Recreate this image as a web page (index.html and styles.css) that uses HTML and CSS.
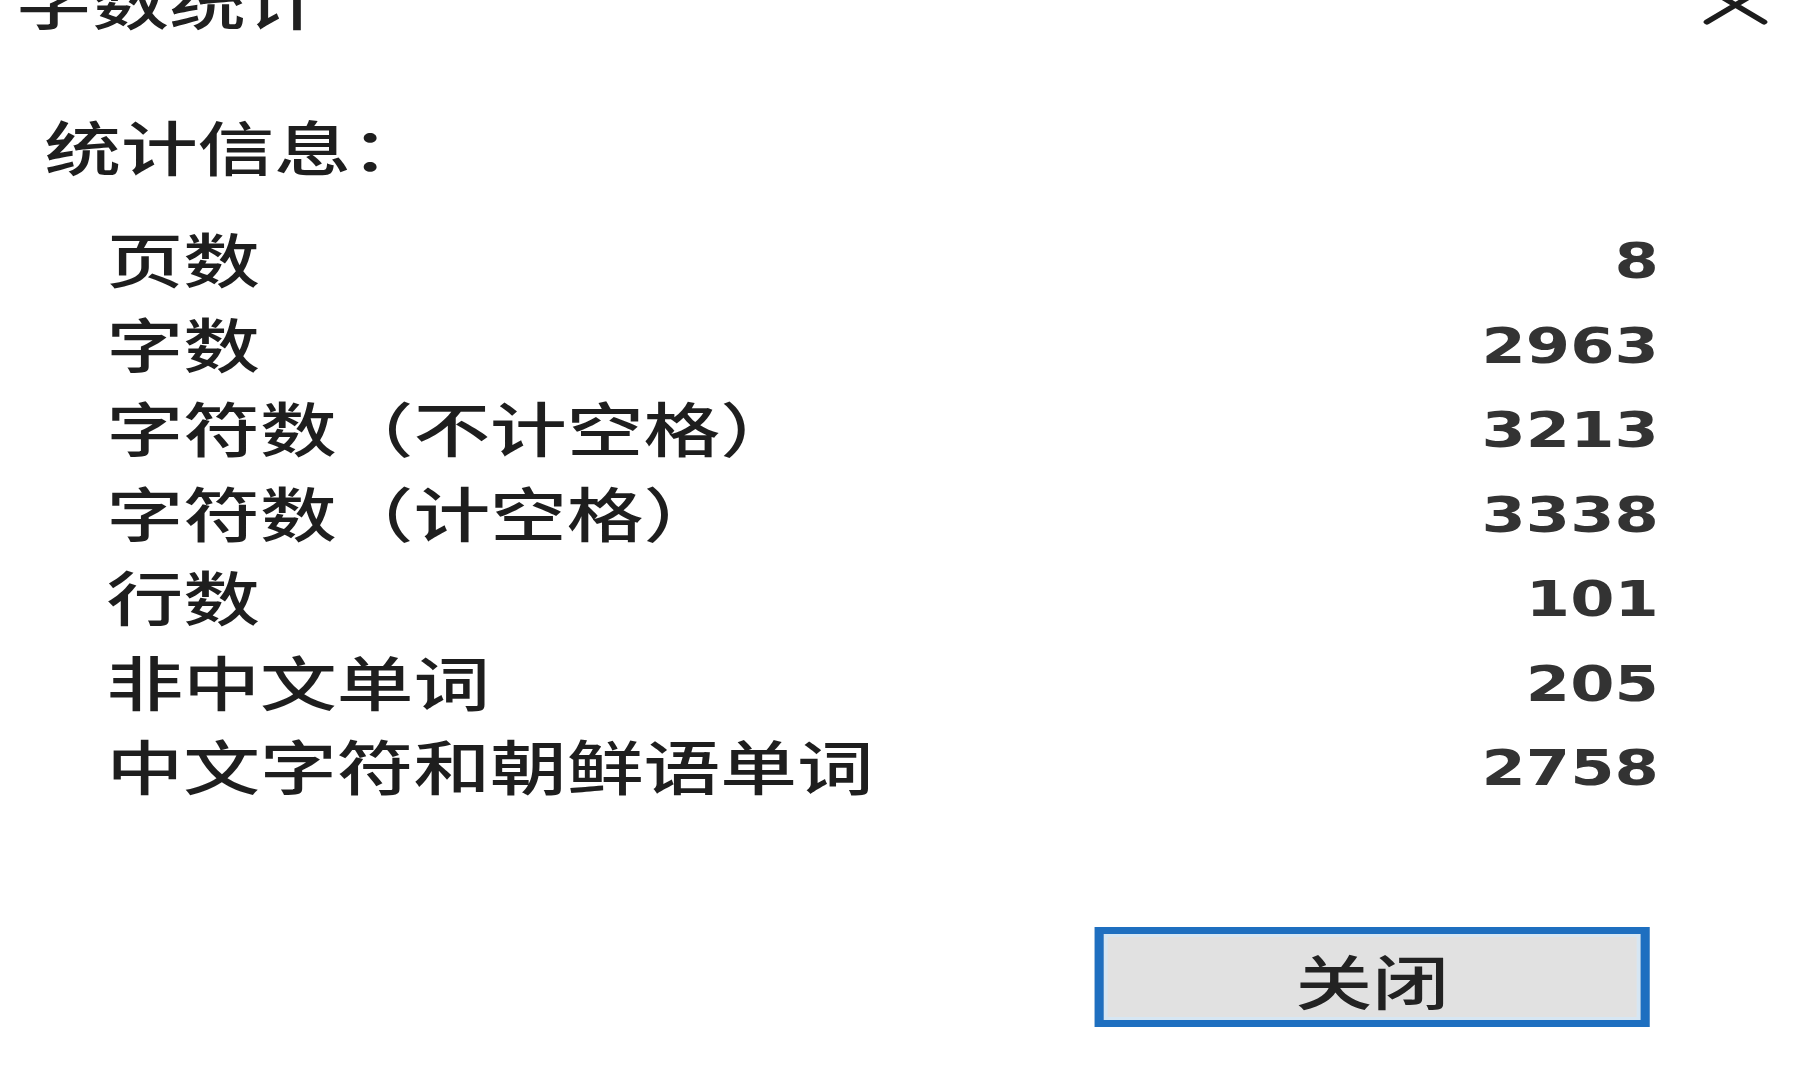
FILE: index.html
```html
<!DOCTYPE html>
<html lang="zh-CN">
<head>
  <meta charset="UTF-8" />
  <meta name="viewport" content="width=device-width, initial-scale=1.0"/>
  <title>字数统计</title>
  <link rel="stylesheet" href="styles.css">
</head>
<body>
  <div class="dialog">
    <div class="title-bar">
      <span class="title">字数统计</span>
      <button class="close-x" aria-label="关闭">
        <svg viewBox="0 0 50 40" width="50" height="40">
          <path d="M3 3 L47 37 M47 3 L3 37" stroke="#1c1c1c" stroke-width="5" stroke-linecap="round" fill="none"/>
        </svg>
      </button>
    </div>

    <div class="stats">
      <div class="stats-heading">统计信息：</div>
      <div class="stats-list">
        <div class="stat-row"><span class="stat-label">页数</span><span class="stat-value">8</span></div>
        <div class="stat-row"><span class="stat-label">字数</span><span class="stat-value">2963</span></div>
        <div class="stat-row"><span class="stat-label">字符数（不计空格）</span><span class="stat-value">3213</span></div>
        <div class="stat-row"><span class="stat-label">字符数（计空格）</span><span class="stat-value">3338</span></div>
        <div class="stat-row"><span class="stat-label">行数</span><span class="stat-value">101</span></div>
        <div class="stat-row"><span class="stat-label">非中文单词</span><span class="stat-value">205</span></div>
        <div class="stat-row"><span class="stat-label">中文字符和朝鲜语单词</span><span class="stat-value">2758</span></div>
      </div>
    </div>

    <div class="dialog-footer">
      <button class="btn-close">关闭</button>
    </div>
  </div>
</body>
</html>
```

FILE: styles.css
```css
html, body {
  margin: 0;
  padding: 0;
  background-color: #fff;
  overflow: hidden;
}

body {
  font-family: "Noto Sans CJK SC", "Noto Sans", sans-serif;
  color: #1e1e1e;
}

/* the dialog is drawn wide: everything inside is stretched sideways */
.dialog {
  width: 1384px;
  height: 1090px;
  transform: scaleX(1.3);
  transform-origin: 0 0;
  font-size: 59px;
  font-weight: 500;
}

.title-bar {
  display: flex;
  justify-content: space-between;
  align-items: center;
  height: 60px;
  margin-top: -30px;
  padding: 0 24px 0 12px;
}

.title {
  line-height: 60px;
  color: #202020;
}

.close-x {
  border: none;
  background: none;
  padding: 0;
  margin-top: 10px;
  display: flex;
}

.stats-heading {
  margin-top: 74px;
  padding-left: 34px;
  line-height: 84px;
}

.stats-list {
  margin-top: 28px;
  padding: 0 108px 0 82px;
}

.stat-row {
  display: flex;
  justify-content: space-between;
  align-items: center;
  height: 84.5px;
  line-height: 84.5px;
}

.stat-value {
  font-family: "DejaVu Sans", "Liberation Sans", sans-serif;
  font-size: 49px;
  font-weight: 700;
  line-height: 1;
  padding-top: 7px;
  color: #333;
}

.dialog-footer {
  display: flex;
  justify-content: flex-end;
  padding-right: 115px;
  margin-top: 119px;
}

.btn-close {
  width: 427px;
  height: 100px;
  box-sizing: border-box;
  border: 7px solid #1e6fc0;
  box-shadow: inset 0 0 0 3px #d6e6f3;
  background-color: #e1e1e1;
  font-family: "Noto Sans CJK SC", sans-serif;
  font-size: 59px;
  font-weight: 500;
  color: #222;
  padding: 6px 0 0;
  line-height: 1;
}
```
